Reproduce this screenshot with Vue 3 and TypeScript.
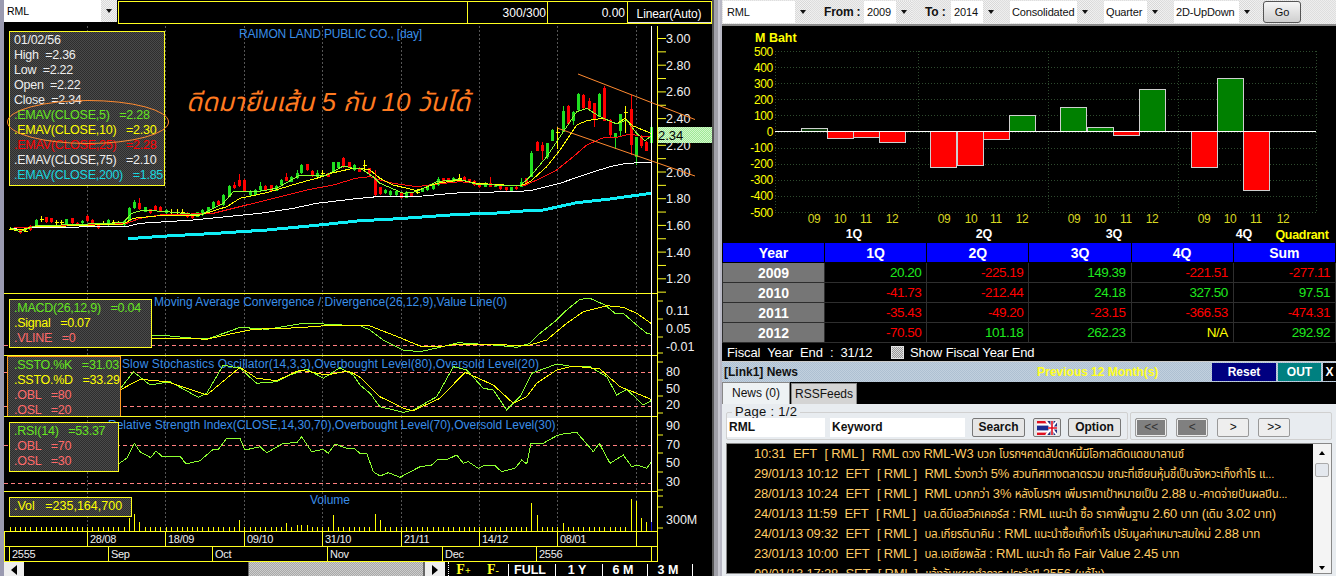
<script setup lang="ts">
type Kind = 'g' | 'r' | 'y'
type Candle = [number, number, number, number, number, Kind]

const raw1: Candle[] = [
  [30,683,687,681,690,'y'],[45,684,690,682,692,'y'],[60,690,698,688,702,'r'],[75,688,695,686,697,'y'],[91,680,690,676,692,'r'],
  [107,660,682,658,684,'g'],[122,653,663,648,665,'y'],[137,652,666,650,668,'r'],[152,655,667,653,669,'r'],[168,662,672,660,674,'y'],
  [183,662,672,660,674,'y'],[199,658,672,656,674,'g'],[215,655,670,654,672,'r'],[230,668,675,666,677,'r'],[246,662,670,660,672,'g'],
  [262,648,664,645,666,'r'],[277,660,668,658,670,'r'],[293,672,685,670,688,'r'],[309,666,672,664,675,'y'],[325,660,675,658,677,'g'],
  [340,662,672,660,675,'y'],[355,665,672,663,674,'y'],[372,662,675,660,677,'g'],[388,625,662,622,664,'g'],[403,605,625,600,628,'g'],
  [418,610,627,595,630,'r'],[434,622,635,620,637,'g'],[450,628,640,626,642,'r'],[466,618,632,616,634,'r'],[481,620,632,618,634,'r'],
  [497,630,640,628,642,'g'],[513,630,640,626,642,'y'],[530,630,640,628,642,'y'],[546,630,640,628,642,'y'],[560,638,650,636,655,'r'],
  [576,645,655,643,657,'r'],[592,637,650,635,652,'g'],[607,630,645,628,647,'g'],[623,622,636,620,638,'g'],[638,607,625,603,627,'g'],
  [654,603,615,601,617,'r'],[670,585,615,583,617,'g'],[686,558,590,556,592,'g'],[702,555,565,545,567,'r'],[717,540,558,522,560,'r'],
  [733,540,575,538,577,'r'],[749,572,585,570,587,'g'],[765,570,585,568,587,'g'],[780,558,570,545,572,'g'],[796,558,570,556,572,'r'],
  [812,556,572,554,574,'r'],[827,558,572,556,574,'g'],[842,540,555,538,557,'g'],[858,530,542,520,544,'r'],[874,530,545,528,547,'g'],
  [890,520,535,510,537,'g'],[904,495,520,493,522,'g'],[920,493,510,491,512,'r'],[935,512,528,510,530,'r'],[951,518,530,510,532,'g'],
  [967,515,530,510,532,'y'],[983,520,530,518,532,'r'],[999,487,515,485,517,'g'],[1014,487,505,485,507,'g'],[1030,473,502,471,504,'r'],
  [1046,487,502,485,504,'r'],[1062,495,510,493,512,'g'],[1077,503,515,501,517,'r'],
]
const raw2: Candle[] = [
  [13,490,510,480,512,'y'],[28,505,520,503,530,'r'],[44,535,585,510,592,'r'],[60,562,582,560,584,'r'],[76,570,580,568,582,'g'],
  [91,572,585,570,587,'g'],[107,572,585,570,587,'g'],[123,580,593,578,595,'r'],[139,575,593,573,595,'g'],[154,580,587,578,589,'r'],
  [170,572,580,568,582,'y'],[186,565,575,563,577,'g'],[202,560,570,558,572,'g'],[218,555,568,553,570,'g'],[233,538,555,530,557,'g'],
  [249,535,545,533,547,'r'],[265,535,547,533,549,'r'],[280,535,545,530,547,'g'],[296,530,545,523,547,'y'],[311,530,540,528,542,'r'],
  [327,538,548,536,550,'r'],[343,543,555,541,557,'r'],[358,552,562,550,564,'r'],[374,550,560,545,562,'g'],[390,548,560,532,562,'r'],
  [405,555,560,552,562,'g'],[421,558,568,556,570,'r'],[437,562,570,560,572,'r'],[452,562,572,560,574,'g'],[468,560,568,558,570,'r'],
  [484,545,560,535,562,'g'],[499,535,552,533,554,'r'],[514,460,530,452,532,'g'],[530,425,452,422,454,'r'],[546,435,452,425,480,'r'],
  [562,430,470,428,478,'g'],[577,390,422,388,424,'g'],[592,390,440,380,447,'y'],[608,332,395,318,397,'g'],[624,318,372,316,376,'r'],
  [640,335,362,333,375,'g'],[655,282,330,278,332,'g'],[670,285,325,283,327,'r'],[686,303,328,295,330,'r'],[702,310,360,308,380,'r'],
  [718,283,350,278,352,'g'],[733,265,362,258,364,'r'],[749,360,405,358,415,'r'],[765,400,415,398,448,'g'],[781,343,392,341,410,'g'],
  [796,330,395,318,400,'y'],[812,327,436,285,465,'r'],[827,412,472,410,495,'g'],[843,408,437,406,445,'r'],[858,425,452,423,454,'r'],
  [873,380,430,375,432,'g'],
]
const candles = [...raw1, ...raw2.map((c): Candle => [c[0] + 1080, c[1], c[2], c[3], c[4], c[5]])].map(c => ({
  x: Math.round(c[0] / 3),
  top: c[1] / 3,
  h: (c[2] - c[1]) / 3,
  y1: c[3] / 3,
  y2: c[4] / 3,
  color: c[5] === 'g' ? '#20e020' : c[5] === 'r' ? '#ff0000' : '#ffff00',
  kind: c[5],
}))

// helper: two lists of points in 3× crops; returns page coordinates
function pts(a: number[], b: number[], oy = 0): string {
  const out: string[] = []
  for (let i = 0; i < a.length; i += 2) out.push(`${(a[i] / 3).toFixed(1)},${(a[i + 1] / 3 + oy).toFixed(1)}`)
  for (let i = 0; i < b.length; i += 2) out.push(`${(b[i] / 3 + 360).toFixed(1)},${(b[i + 1] / 3 + oy).toFixed(1)}`)
  return out.join(' ')
}

const emaCyan = pts([385,716,500,708,650,700,800,690,950,676,1080,662],[100,657,200,650,300,643,400,640,500,632,550,630,650,608,750,597,873,580])
const emaWhite = pts([30,685,100,682,380,680,420,670,580,660,700,648,780,640,880,625,950,610,1060,597],[50,590,190,588,300,578,450,575,510,572,600,550,680,522,750,500,800,490,873,487])
const emaRed = pts([30,685,100,680,380,670,420,655,480,645,640,640,700,625,800,600,920,570,1000,555,1060,537],[0,533,30,530,60,540,100,550,170,560,230,552,300,545,400,555,490,558,530,540,590,510,640,470,680,435,730,413,770,412,810,402,840,408,873,410])
const emaYellow = pts([30,685,60,690,100,680,200,678,370,672,400,655,500,645,600,645,680,620,720,595,800,578,900,548,950,535,1000,518,1060,505],[0,505,30,510,60,535,100,555,170,572,230,550,300,540,350,550,480,558,510,545,560,500,600,450,650,375,680,362,730,355,770,372,795,355,820,378,873,400])
const emaGreen = pts([30,683,60,695,105,678,370,668,395,640,430,630,500,635,600,645,670,610,700,575,770,575,830,565,900,525,980,525,1030,498,1060,505],[0,505,40,530,60,550,130,580,170,575,230,545,300,538,350,553,480,558,510,530,560,470,600,410,650,335,680,325,720,350,770,372,800,360,830,400,855,422,873,408])

const macdG = pts([455,137,500,137,560,143,620,147,680,127,720,112,800,118,910,100,1000,103,1060,108],[0,107,30,120,70,150,130,180,180,185,240,172,295,158,400,165,470,172,510,160,540,130,590,90,620,60,660,28,690,25,735,45,765,70,790,70,830,105,860,130,873,133],290)
const macdY = pts([455,145,560,145,620,148,700,130,760,118,900,113,1000,105,1060,105],[0,105,30,108,100,135,180,168,240,170,290,163,400,163,500,168,560,150,620,100,670,65,740,47,790,52,830,70,873,100],290)
const stoG = pts([360,298,400,245,450,285,510,275,595,322,620,310,670,225,720,235,770,280,830,275,870,255,920,237,970,265,1020,233,1060,255],[0,285,30,310,60,350,130,367,160,360,230,320,280,230,320,240,370,295,400,300,440,360,480,320,515,250,590,222,640,230,690,230,740,260,770,315,800,298,850,345,873,332],290)
const stoY = pts([360,300,420,268,500,275,620,315,720,232,770,265,830,272,900,240,980,255,1040,243,1060,250],[0,262,60,320,130,355,160,362,240,325,315,247,400,285,460,340,500,320,530,280,590,240,640,228,720,237,780,290,830,310,873,328],290)
const rsiG = pts([358,520,380,505,403,460,420,485,452,503,468,483,485,498,540,498,558,522,600,512,640,478,655,478,680,445,720,445,735,480,780,470,800,488,850,460,890,458,905,440,935,485,970,478,985,490,1005,462,1040,475,1062,475],[0,490,20,490,40,545,60,558,85,548,120,562,180,530,215,525,235,507,265,507,290,495,310,520,325,515,355,535,375,525,405,527,425,545,465,535,485,510,500,522,513,460,550,460,590,437,610,432,650,427,700,485,718,460,750,520,790,495,815,530,830,525,860,535,873,517],290)

const priceLabels = ['3.00','2.80','2.60','2.40','2.20','2.00','1.80','1.60','1.40','1.20']
const priceTicks = Array.from({ length: 20 }, (_, i) => 38.5 + i * 13.35)
const dateGrid = [87.5, 165.5, 244.5, 322.5, 401.5, 479.5, 557.5, 636.5]

const bigVol: Record<number, number> = { 129: 13, 134: 17, 139: 9, 239: 11, 297: 6, 302: 6, 307: 6, 333: 16, 287: 8, 374: 17, 380: 11, 531: 28, 537: 16, 562: 8, 631: 32, 637: 30, 641: 13, 646: 9, 649: 10 }
const volBars = candles.map(c => {
  let h = 4
  for (const k of Object.keys(bigVol)) {
    if (Math.abs(Number(k) - c.x) <= 2) h = bigVol[Number(k)]
  }
  return { x: c.x, h }
})

const legendMain = [
  ['01/02/56', 'c-white'], ['High  =2.36', 'c-white'], ['Low  =2.22', 'c-white'], ['Open  =2.22', 'c-white'], ['Close  =2.34', 'c-white'],
  ['.EMAV(CLOSE,5)   =2.28', 'c-green'], ['.EMAV(CLOSE,10)   =2.30', 'c-yellow'], ['.EMAV(CLOSE,25)   =2.28', 'c-red'],
  ['.EMAV(CLOSE,75)   =2.10', 'c-white'], ['.EMAV(CLOSE,200)   =1.85', 'c-cyan'],
]
const legendMacd = [['.MACD(26,12,9)   =0.04', 'c-green'], ['.Signal   =0.07', 'c-yellow'], ['.VLINE   =0', 'c-pink']]
const legendSto = [['.SSTO.%K   =31.03', 'c-green'], ['.SSTO.%D   =33.29', 'c-yellow'], ['.OBL   =80', 'c-pink'], ['.OSL   =20', 'c-pink']]
const legendRsi = [['.RSI(14)   =53.37', 'c-green'], ['.OBL   =70', 'c-pink'], ['.OSL   =30', 'c-pink']]
const legendVol = '.Vol   =235,164,700'

const dates = ['', '28/08', '18/09', '09/10', '31/10', '21/11', '14/12', '08/01', '']
const months = ['', '2555', 'Sep', 'Oct', 'Nov', 'Dec', '2556', '']

const zoomBtns = ['FULL', '1 Y', '6 M', '3 M']

const barYLabels = [500, 400, 300, 200, 100, 0, -100, -200, -300, -400, -500]
const zero = 131.5
const barScale = 0.161
const barGroups = [
  [[801, 20.2, 'l'], [827, -41.73, 'd'], [853, -35.43, 'd'], [879, -70.5, 'd']],
  [[930, -225.19, 'd'], [957, -212.44, 'd'], [983, -49.2, 'd'], [1009, 101.18, 'u']],
  [[1060, 149.39, 'u'], [1087, 24.18, 'u'], [1113, -23.15, 'd'], [1139, 262.23, 'u']],
  [[1191, -221.51, 'd'], [1217, 327.5, 'u'], [1243, -366.53, 'd']],
] as [number, number, string][][]
const bars = barGroups.flat().map(([x, v, k]) => ({
  x,
  y: v >= 0 ? zero - v * barScale : zero,
  h: Math.abs(v) * barScale,
  fill: k === 'l' ? '#0a3a0a' : k === 'u' ? '#008000' : '#ff0000',
}))
const barXLabels = [814, 840, 866, 892, 944, 971, 996, 1022, 1074, 1100, 1126, 1152, 1204, 1230, 1256, 1283]
const barXText = ['09', '10', '11', '12']

const table = [
  ['2009', '20.20', '-225.19', '149.39', '-221.51', '-277.11'],
  ['2010', '-41.73', '-212.44', '24.18', '327.50', '97.51'],
  ['2011', '-35.43', '-49.20', '-23.15', '-366.53', '-474.31'],
  ['2012', '-70.50', '101.18', '262.23', 'N/A', '292.92'],
]
function cellClass(v: string): string {
  if (v === 'N/A') return 'c-yellow'
  return v.startsWith('-') ? 'c-red' : 'c-lime'
}

const news = [
  ['10:31', 'EFT', 'RML ดวง RML-W3 บวก โบรกฯคาดสัปดาห์นี้มีโอกาสติดแดชบาลานซ์'],
  ['29/01/13 10:12', 'EFT', 'RML ร่วงกว่า 5% สวนทิศทางตลาดรวม ขณะที่เซียนหุ้นชี้เป็นจังหวะเก็งกำไร แ...'],
  ['28/01/13 10:24', 'EFT', 'RML บวกกว่า 3% หลังโบรกฯ เพิ่มราคาเป้าหมายเป็น 2.88 บ.-คาดจ่ายปันผลปีน...'],
  ['24/01/13 11:59', 'EFT', 'บล.ดีบีเอสวิคเคอร์ส : RML แนะนำ ซื้อ ราคาพื้นฐาน 2.60 บาท (เดิม 3.02 บาท)'],
  ['24/01/13 09:32', 'EFT', 'บล.เกียรตินาคิน : RML แนะนำซื้อเก็งกำไร ปรับมูลค่าเหมาะสมใหม่ 2.88 บาท'],
  ['23/01/13 10:00', 'EFT', 'บล.เอเซียพลัส : RML แนะนำ ถือ Fair Value 2.45 บาท'],
  ['09/01/13 17:28', 'SET', 'แจ้งวันหยุดทำการ ประจำปี 2556 (แก้ไข)'],
]
// Thai runs are drawn smaller than the Latin text around them, as in the reference
function runs(text: string): { t: string; th: boolean }[] {
  return text
    .split(/([\u0E00-\u0E7F.]*[\u0E00-\u0E7F][\u0E00-\u0E7F.]*)/)
    .filter(s => s.length > 0)
    .map(s => ({ t: s, th: /[\u0E00-\u0E7F]/.test(s) }))
}
</script>

<template>
  <div class="app">
    <section class="left">
      <div class="topbar">
        <div class="symbol"><span>RML</span><i class="arrow-btn dark"></i></div>
        <div class="topcells">
          <div class="tc tc-a"></div>
          <div class="tc tc-b">300/300</div>
          <div class="tc tc-c">0.00</div>
          <div class="tc tc-d"><span>Linear(Auto)</span></div>
        </div>
      </div>

      <div class="panel p-main">
        <svg class="plot" viewBox="4 24 708 269" width="708" height="269">
          <defs>
            <pattern id="gdither" width="2" height="2" patternUnits="userSpaceOnUse">
              <rect width="2" height="2" fill="#9fe896" />
              <rect width="1" height="1" fill="#d4f8cc" />
              <rect x="1" y="1" width="1" height="1" fill="#d4f8cc" />
            </pattern>
          </defs>
          <line v-for="x in dateGrid" :key="x" :x1="x" y1="26" :x2="x" y2="293" class="vgrid" />
          <text x="239" y="38" class="title main-title">RAIMON LAND PUBLIC CO., [day]</text>
          <polyline :points="emaCyan" fill="none" stroke="#10eef6" stroke-width="3" shape-rendering="crispEdges" />
          <g shape-rendering="crispEdges">
            <g v-for="c in candles" :key="c.x">
              <line :x1="c.x + 0.5" :y1="c.y1" :x2="c.x + 0.5" :y2="c.y2" :stroke="c.color" />
              <rect v-if="c.kind !== 'y'" :x="c.x - 1" :y="c.top" width="3.4" :height="c.h" :fill="c.color" />
              <line v-else :x1="c.x - 1.5" :y1="c.top + 2" :x2="c.x + 2.5" :y2="c.top + 2" :stroke="c.color" />
            </g>
          </g>
          <polyline :points="emaWhite" class="ln" stroke="#ffffff" />
          <polyline :points="emaRed" class="ln" stroke="#ff1010" />
          <polyline :points="emaYellow" class="ln" stroke="#ffff00" />
          <polyline :points="emaGreen" class="ln" stroke="#8cff30" />
          <line x1="651.5" y1="26" x2="651.5" y2="293" stroke="#fff" />
          <line x1="657.5" y1="26" x2="657.5" y2="293" class="axis" />
          <line v-for="t in priceTicks" :key="t" x1="658" :y1="t" x2="666" :y2="t" class="axis" />
          <text v-for="(l, i) in priceLabels" :key="l" x="666" :y="43 + i * 26.7" class="ax-lab">{{ l }}</text>
          <rect x="658" y="127" width="54" height="16" fill="url(#gdither)" />
          <text x="658" y="140" class="last-lab">2.34</text>
        </svg>
        <div class="legend lg-main">
          <div v-for="l in legendMain" :key="l[0]" :class="l[1]">{{ l[0] }}</div>
        </div>
        <svg class="annot" viewBox="4 24 708 269" width="708" height="269">
          <ellipse cx="88" cy="122" rx="80.5" ry="21.5" fill="none" stroke="#ff8a30" />
          <line x1="578" y1="74" x2="695" y2="119.5" stroke="#ff8a30" />
          <line x1="557" y1="128" x2="695" y2="176" stroke="#ff8a30" />
          <text x="186" y="111" class="thai-note">ดีดมายืนเส้น 5 กับ 10 วันได้</text>
        </svg>
      </div>

      <div class="panel p-macd">
        <svg class="plot" viewBox="4 293 708 62" width="708" height="62">
          <line v-for="x in dateGrid" :key="x" :x1="x" y1="293" :x2="x" y2="355" class="vgrid" />
          <line x1="4" y1="293.5" x2="657" y2="293.5" class="axis" />
          <line x1="4" y1="345.5" x2="651" y2="345.5" class="dash" />
          <text x="154" y="306" class="title">Moving Average Convergence / Divergence(26,12,9),Value Line(0)</text>
          <polyline :points="macdG" class="ln" stroke="#8cff30" />
          <polyline :points="macdY" class="ln" stroke="#ffff00" />
          <line x1="651.5" y1="293" x2="651.5" y2="355" stroke="#fff" />
          <line x1="657.5" y1="293" x2="657.5" y2="355" class="axis" />
          <line v-for="t in [301, 319, 337, 353]" :key="t" x1="658" :y1="t" x2="663" :y2="t" class="axis" />
          <text x="666" y="315" class="ax-lab">0.11</text>
          <text x="666" y="333" class="ax-lab">0.05</text>
          <text x="666" y="351" class="ax-lab neg">-0.01</text>
        </svg>
        <div class="legend lg-macd"><div v-for="l in legendMacd" :key="l[0]" :class="l[1]">{{ l[0] }}</div></div>
      </div>

      <div class="panel p-sto">
        <svg class="plot" viewBox="4 355 708 61" width="708" height="61">
          <line v-for="x in dateGrid" :key="x" :x1="x" y1="355" :x2="x" y2="416" class="vgrid" />
          <line x1="4" y1="355" x2="657" y2="355" class="axis thick" />
          <line x1="4" y1="372.5" x2="651" y2="372.5" class="dash" />
          <line x1="4" y1="406.5" x2="651" y2="406.5" class="dash" />
          <text x="122" y="368" class="title wide">Slow Stochastics Oscillator(14,3,3),Overbought Level(80),Oversold Level(20)</text>
          <polyline :points="stoG" class="ln" stroke="#8cff30" />
          <polyline :points="stoY" class="ln" stroke="#ffff00" />
          <line x1="651.5" y1="355" x2="651.5" y2="416" stroke="#fff" />
          <line x1="657.5" y1="355" x2="657.5" y2="416" class="axis" />
          <line v-for="t in [362, 380, 396, 413]" :key="t" x1="658" :y1="t" x2="663" :y2="t" class="axis" />
          <text x="666" y="376" class="ax-lab">80</text>
          <text x="666" y="393" class="ax-lab">50</text>
          <text x="666" y="409" class="ax-lab">20</text>
        </svg>
        <div class="legend lg-sto"><div v-for="l in legendSto" :key="l[0]" :class="l[1]">{{ l[0] }}</div></div>
      </div>

      <div class="panel p-rsi">
        <svg class="plot" viewBox="4 416 708 75" width="708" height="75">
          <line v-for="x in dateGrid" :key="x" :x1="x" y1="416" :x2="x" y2="491" class="vgrid" />
          <line x1="4" y1="416" x2="657" y2="416" class="axis thick" />
          <line x1="4" y1="445.5" x2="651" y2="445.5" class="dash" />
          <line x1="4" y1="483.5" x2="651" y2="483.5" class="dash" />
          <text x="108" y="429" class="title">Relative Strength Index(CLOSE,14,30,70),Overbought Level(70),Oversold Level(30)</text>
          <polyline :points="rsiG" class="ln" stroke="#8cff30" />
          <line x1="651.5" y1="416" x2="651.5" y2="491" stroke="#fff" />
          <line x1="657.5" y1="416" x2="657.5" y2="491" class="axis" />
          <line v-for="t in [435, 453, 472, 490]" :key="t" x1="658" :y1="t" x2="663" :y2="t" class="axis" />
          <text x="666" y="430" class="ax-lab">90</text>
          <text x="666" y="449" class="ax-lab">70</text>
          <text x="666" y="467" class="ax-lab">50</text>
          <text x="666" y="486" class="ax-lab">30</text>
        </svg>
        <div class="legend lg-rsi"><div v-for="l in legendRsi" :key="l[0]" :class="l[1]">{{ l[0] }}</div></div>
      </div>

      <div class="panel p-vol">
        <svg class="plot" viewBox="4 491 708 40" width="708" height="40">
          <line x1="4" y1="491.5" x2="657" y2="491.5" class="axis" />
          <line v-for="x in dateGrid" :key="x" :x1="x" y1="492" :x2="x" y2="531" class="vgrid" />
          <text x="310" y="504" class="title">Volume</text>
          <g shape-rendering="crispEdges">
            <line v-for="b in volBars" :key="b.x" :x1="b.x + 0.5" :y1="531 - b.h" :x2="b.x + 0.5" y2="531" stroke="#ffff00" />
          </g>
          <line x1="651.5" y1="491" x2="651.5" y2="522" stroke="#fff" />
          <line x1="651.5" y1="522" x2="651.5" y2="531" stroke="#2020e0" />
          <line x1="657.5" y1="491" x2="657.5" y2="531" class="axis" />
          <line v-for="t in [496, 507, 528]" :key="t" x1="658" :y1="t" x2="663" :y2="t" class="axis" />
          <text x="666" y="524" class="ax-lab">300M</text>
        </svg>
        <div class="legend lg-vol c-yellow">{{ legendVol }}</div>
      </div>

      <div class="datebar">
        <div class="daterow">
          <div v-for="(d, i) in dates" :key="i" class="dcell">{{ d }}</div>
        </div>
        <div class="monthrow">
          <div v-for="(m, i) in months" :key="i" class="mcell">{{ m }}</div>
        </div>
      </div>

      <div class="bottombar">
        <div class="sb-btn"><svg width="6" height="10" viewBox="0 0 6 10"><path d="M6 0v10L0 5z" fill="#000"/></svg></div>
        <div class="sb-track"></div>
        <div class="sb-thumb"></div>
        <div class="sb-btn"><svg width="6" height="10" viewBox="0 0 6 10"><path d="M0 0v10l6-5z" fill="#000"/></svg></div>
        <div class="ztool">
          <span class="zf">F<small>+</small></span>
          <span class="zf">F<small>-</small></span>
          <span v-for="z in zoomBtns" :key="z" class="zb">{{ z }}</span>
        </div>
      </div>
    </section>

    <div class="splitter"></div>

    <section class="right">
      <div class="toolbar">
        <div class="combo w-rml"><span>RML</span></div><i class="arrow-btn"></i>
        <b class="lab ml-from">From :</b>
        <div class="combo w-yr"><span>2009</span></div><i class="arrow-btn"></i>
        <b class="lab ml-to">To :</b>
        <div class="combo w-yr"><span>2014</span></div><i class="arrow-btn"></i>
        <div class="combo w-con ml-s"><span>Consolidated</span></div><i class="arrow-btn"></i>
        <div class="combo w-qua ml-s"><span>Quarter</span></div><i class="arrow-btn"></i>
        <div class="combo w-2d ml-s"><span>2D-UpDown</span></div><i class="arrow-btn"></i>
        <button class="go">Go</button>
      </div>

      <div class="barchart">
        <svg viewBox="722 26 614 217" width="614" height="217">
          <g shape-rendering="crispEdges">
            <line v-for="(l, i) in barYLabels" :key="l" x1="775" :y1="51.5 + i * 16.1" x2="1316" :y2="51.5 + i * 16.1" class="bgrid" />
            <line v-for="x in [775.5, 918.5, 1048.5, 1178.5, 1316.5]" :key="x" :x1="x" y1="51" :x2="x" y2="212" class="bgrid" />
            <rect v-for="b in bars" :key="b.x" :x="b.x + 0.5" :y="b.y" width="26" :height="b.h" :fill="b.fill" stroke="#cfcfcf" />
            <line x1="775" y1="131.5" x2="1316" y2="131.5" stroke="#ffffff" />
          </g>
          <text x="755" y="42" class="mbaht">M Baht</text>
          <text v-for="(l, i) in barYLabels" :key="l" x="773" :y="55.5 + i * 16.1" class="by-lab">{{ l }}</text>
          <text v-for="(x, i) in barXLabels" :key="x" :x="x" y="223" class="bx-lab">{{ barXText[i % 4] }}</text>
          <text x="854" y="238" class="q-lab">1Q</text>
          <text x="984" y="238" class="q-lab">2Q</text>
          <text x="1114" y="238" class="q-lab">3Q</text>
          <text x="1244" y="238" class="q-lab">4Q</text>
          <text x="1302" y="239" class="quad">Quadrant</text>
        </svg>
      </div>

      <table class="fin">
        <thead>
          <tr><th v-for="h in ['Year', '1Q', '2Q', '3Q', '4Q', 'Sum']" :key="h">{{ h }}</th></tr>
        </thead>
        <tbody>
          <tr v-for="r in table" :key="r[0]">
            <td class="yr">{{ r[0] }}</td>
            <td v-for="(v, i) in r.slice(1)" :key="i" :class="cellClass(v)">{{ v }}</td>
          </tr>
        </tbody>
      </table>

      <div class="fiscal">
        <span class="fy">Fiscal&nbsp; Year&nbsp; End&nbsp; :&nbsp; 31/12</span>
        <i class="chk"></i>
        <span>Show Fiscal Year End</span>
      </div>

      <div class="newshead">
        <b class="nh-title">[Link1] News</b>
        <b class="nh-prev">Previous 12 Month(s)</b>
        <b class="nh-btn reset">Reset</b>
        <b class="nh-btn out">OUT</b>
        <b class="nh-btn x">X</b>
      </div>

      <div class="tabs">
        <div class="tab active">News (0)</div>
        <div class="tab">RSSFeeds</div>
      </div>

      <div class="newsbody">
        <div class="controls">
          <fieldset class="fs fs-a">
            <legend>Page : 1/2</legend>
            <div class="ctlrow">
              <div class="inp i-a">RML</div>
              <div class="inp i-b">Keyword</div>
              <div class="btn b-search">Search</div>
              <div class="btn b-flag">
                <svg width="20" height="14" viewBox="0 0 20 14">
                  <rect width="20" height="14" fill="#fff"/>
                  <rect y="0" width="20" height="2.4" fill="#e01020"/>
                  <rect y="4.6" width="20" height="4.8" fill="#1a2a90"/>
                  <rect y="11.6" width="20" height="2.4" fill="#e01020"/>
                  <path d="M20 0H9L20 9z" fill="#24307f"/>
                  <path d="M20 5L9 14h11z" fill="#24307f"/>
                  <path d="M9 0l11 14M20 0L9 14" stroke="#fff" stroke-width="2"/>
                  <path d="M15 0v14M11 7h9" stroke="#fff" stroke-width="3"/>
                  <path d="M15 0v14M11 7h9" stroke="#e01020" stroke-width="1.6"/>
                </svg>
              </div>
              <div class="btn b-opt">Option</div>
            </div>
          </fieldset>
          <fieldset class="fs fs-b">
            <div class="ctlrow pager">
              <div class="pg off">&lt;&lt;</div>
              <div class="pg off p1">&lt;</div>
              <div class="pg">&gt;</div>
              <div class="pg">&gt;&gt;</div>
            </div>
          </fieldset>
        </div>

        <div class="listbox">
          <div class="list">
            <div v-for="(n, i) in news" :key="i" class="row">
              <span>{{ n[0] }}</span><span class="m">{{ n[1] }}</span><span class="m">[ RML ]</span><span class="m"><span v-for="(r, j) in runs(n[2])" :key="j" :class="{ th: r.th }">{{ r.t }}</span></span>
            </div>
          </div>
          <div class="vscroll">
            <svg width="10" height="6" viewBox="0 0 10 6"><path d="M5 1l3 4H2z" fill="#000"/></svg>
            <div class="vthumb"></div>
            <div class="vspace"></div>
            <svg width="10" height="6" viewBox="0 0 10 6"><path d="M5 5l3-4H2z" fill="#000"/></svg>
          </div>
        </div>
      </div>
    </section>
  </div>
</template>

<style>
html, body { margin: 0; padding: 0; background: #b0b0bc; }
</style>

<style scoped>
.app {
  display: flex;
  width: 1336px;
  height: 576px;
  overflow: hidden;
  font-family: "Liberation Sans", Arial, "Noto Sans Thai", "Noto Sans", sans-serif;
  background: #b8b8c4;
}
.left {
  width: 712px;
  flex: none;
  box-sizing: border-box;
  border-left: 4px solid #9a9ab0;
  background: #000;
  display: flex;
  flex-direction: column;
  color: #fff;
}
.splitter {
  width: 8px;
  flex: none;
  background: linear-gradient(90deg, #555 0 2px, #a0a0a8 2px 6px, #c8c8d0 6px);
}
.topbar { display: flex; height: 24px; flex: none; }
.symbol {
  width: 113px;
  height: 22px;
  background: #fff;
  color: #000;
  font-size: 10.5px;
  display: flex;
  align-items: center;
  justify-content: space-between;
  padding-left: 3px;
  box-sizing: border-box;
}
.topcells {
  margin-left: 1px;
  flex: 1;
  display: flex;
  height: 23px;
  margin-top: 1px;
  box-sizing: border-box;
  border: 1px solid #ffff20;
  font-size: 12px;
}
.tc { border-right: 1px solid #ffff20; display: flex; align-items: center; justify-content: flex-end; padding-right: 1px; box-sizing: border-box; }
.tc-a { width: 349px; }
.tc-b { width: 80px; }
.tc-c { width: 80px; padding-right: 2px; }
.tc-d { flex: 1; border-right: 0; justify-content: center; border-bottom: 1px solid #ddd; padding-top: 3px; }
.tc-d span { letter-spacing: -0.1px; }

.arrow-btn {
  flex: none;
  display: block;
  position: relative;
  width: 16px;
  height: 22px;
  background-color: #e4e4e4;
  background-image: repeating-conic-gradient(#f2f2f2 0 25%, #d8d8d8 0 50%);
  background-size: 2px 2px;
}
.arrow-btn::after {
  content: "";
  position: absolute;
  left: 5px;
  top: 9px;
  border: 3px solid transparent;
  border-top: 4px solid #111;
  border-bottom: 0;
}

.panel { position: relative; flex: none; }
.plot, .annot { display: block; }
.annot { position: absolute; left: 0; top: 0; pointer-events: none; }
.vgrid { stroke: #555; stroke-width: 1; stroke-dasharray: 2 2; }
.ln { fill: none; stroke-width: 1; shape-rendering: crispEdges; }
.axis { stroke: #ffff20; stroke-width: 1; }
.axis.thick { stroke-width: 2; }
.dash { stroke: #ff7f7f; stroke-dasharray: 4 3; }
.title { fill: #3a8ee8; font-size: 12px; }
.title.main-title { letter-spacing: -0.15px; }
.title.wide { letter-spacing: 0.1px; }
.ax-lab { fill: #f0f0f0; font-size: 12.5px; }
.last-lab { fill: #000; font-size: 13px; }
.thai-note { fill: #ff7a20; font-size: 26px; font-style: italic; }

.legend {
  position: absolute;
  box-sizing: border-box;
  border: 1px solid #ffff20;
  background-color: #3a3a3a;
  background-image: repeating-conic-gradient(#4a4a4a 0 25%, #2e2e2e 0 50%);
  background-size: 2px 2px;
  font-size: 12.5px;
  line-height: 15px;
  white-space: pre;
  padding: 1px 0 0 4px;
  letter-spacing: -0.25px;
}
.lg-main { left: 5px; top: 7px; width: 156px; height: 155px; }
.lg-macd { left: 5px; top: 6px; width: 143px; height: 49px; }
.lg-sto { left: 3px; top: 1px; width: 114px; height: 60px; border-color: #ff9a20; border-bottom: 0; padding-left: 6px; }
.lg-rsi { left: 5px; top: 6px; width: 110px; height: 50px; }
.lg-vol { left: 5px; top: 6px; width: 123px; height: 20px; letter-spacing: 0; }
.c-white { color: #eee; }
.c-green { color: #66e620; }
.c-yellow { color: #ffff00; }
.c-red { color: #ff0000; }
.c-cyan { color: #18d8e0; }
.c-pink { color: #ff6a6a; }
.c-lime { color: #1ee81e; }

.datebar { flex: none; width: 654px; font-size: 11px; letter-spacing: -0.3px; color: #eee; }
.daterow {
  display: grid;
  grid-template-columns: 84px 78px 79px 78px 79px 78px 78px 79px 21px;
  height: 15px;
  border-top: 1px solid #ffff20;
  box-sizing: border-box;
}
.monthrow {
  display: grid;
  grid-template-columns: 6px 99px 104px 115px 115px 94px 115px 6px;
  height: 16px;
  border-top: 1px solid #ffff20;
  border-bottom: 1px solid #ffff20;
  box-sizing: border-box;
}
.dcell, .mcell {
  border-right: 1px solid #ffff20;
  padding-left: 2px;
  line-height: 14px;
  box-sizing: border-box;
  overflow: hidden;
}
.dcell:first-child, .mcell:first-child { border-left: 1px solid #ffff20; }

.bottombar { flex: 1; display: flex; background: #000; align-items: stretch; }
.sb-btn {
  width: 20px;
  background: #eee;
  display: flex;
  align-items: center;
  justify-content: center;
  flex: none;
}
.sb-track { width: 224px; flex: none; }
.sb-thumb {
  width: 177px;
  flex: none;
  border-left: 1px solid #666;
  border-right: 2px solid #666;
  box-sizing: border-box;
  background-color: #bbb;
  background-image: repeating-conic-gradient(#ccc 0 25%, #a8a8a8 0 50%);
  background-size: 2px 2px;
}
.ztool { flex: 1; display: flex; align-items: center; font-weight: 700; color: #fff; font-size: 12.5px; padding-left: 3px; }
.zf { color: #ffff20; width: 30px; text-align: center; font-family: "Liberation Serif", serif; font-size: 14px; border-left: 1px dotted #fff; box-sizing: border-box; }
.zf small { font-size: 10px; }
.zf + .zf { border-left: 0; }
.zb { border-left: 1px solid #fff; text-align: center; line-height: 12px; flex: none; width: 47px; padding-right: 4px; box-sizing: border-box; }
.zb:first-of-type { width: 56px; }
.zb:nth-last-child(2) { width: 45px; }
.zb:last-child { width: 46px; border-right: 1px solid #fff; }

.right {
  flex: 1;
  display: flex;
  flex-direction: column;
  box-sizing: border-box;
  border-left: 2px solid #b8b8c4;
  background: #000;
  font-size: 14px;
  color: #fff;
  min-width: 0;
}
.toolbar {
  flex: none;
  height: 26px;
  box-sizing: border-box;
  padding: 2px 0 2px 1px;
  display: flex;
  align-items: center;
  font-size: 11px;
  letter-spacing: -0.15px;
  color: #111;
  background-color: #e8e8e8;
  background-image: repeating-conic-gradient(#eee 0 25%, #dedede 0 50%);
  background-size: 2px 2px;
  border-bottom: 2px solid #8a8a8a;
}
.combo { height: 22px; background: #fff; display: flex; align-items: center; padding-left: 2px; box-sizing: border-box; flex: none; }
.w-rml { width: 72px; padding-left: 4px; }
.w-yr { width: 32px; padding-left: 3px; }
.w-con { width: 67px; }
.w-qua { width: 43px; }
.w-2d { width: 65px; }
.ml-s { margin-left: 11px; }
.lab { font-size: 12px; flex: none; }
.ml-from { margin-left: 13px; width: 40px; }
.ml-to { margin-left: 13px; width: 26px; }
.go {
  margin-left: 8px;
  width: 38px;
  height: 22px;
  padding: 0;
  font: 11px "Liberation Sans", sans-serif;
  color: #111;
  background: linear-gradient(#f6f6f6, #cfcfcf);
  border: 1px solid #555;
  border-radius: 3px;
  flex: none;
}
.barchart { flex: none; height: 216px; overflow: hidden; }
.barchart svg { display: block; }
.bgrid { stroke: #2e4a2e; stroke-dasharray: 1 2; }
.mbaht { fill: #ffff00; font-size: 12.5px; font-weight: 700; }
.by-lab { fill: #ffff00; font-size: 12px; text-anchor: end; letter-spacing: -0.3px; }
.bx-lab { fill: #d8d820; font-size: 12px; text-anchor: middle; letter-spacing: -0.3px; }
.q-lab { fill: #fff; font-size: 12.5px; font-weight: 700; text-anchor: middle; }
.quad { fill: #ffff00; font-size: 12.5px; font-weight: 700; text-anchor: middle; letter-spacing: -0.3px; }

.fin {
  flex: none;
  width: 614px;
  table-layout: fixed;
  border-collapse: collapse;
  font-size: 13.5px;
  letter-spacing: -0.5px;
}
.fin th {
  height: 20px;
  padding: 0;
  background: #0000ff;
  color: #fff;
  font-size: 14px;
  font-weight: 700;
  border: 1px solid #000;
  letter-spacing: 0;
  box-sizing: border-box;
}
.fin td {
  height: 20px;
  padding: 0 5px 0 0;
  text-align: right;
  border: 1px solid #2e2e2e;
  box-sizing: border-box;
}
.fin td.yr {
  text-align: center;
  padding: 0;
  color: #fff;
  font-weight: 700;
  font-size: 14px;
  letter-spacing: 0;
  background-color: #777;
  background-image: repeating-conic-gradient(#848484 0 25%, #686868 0 50%);
  background-size: 2px 2px;
}
.fin th:first-child, .fin td:first-child { width: 102px; }

.fiscal {
  flex: none;
  height: 18px;
  display: flex;
  align-items: center;
  font-size: 13px;
  padding-left: 5px;
  letter-spacing: -0.1px;
}
.fy { width: 164px; flex: none; }
.chk {
  display: block;
  width: 13px;
  height: 13px;
  margin-right: 6px;
  background-color: #bbb;
  background-image: repeating-conic-gradient(#ddd 0 25%, #999 0 50%);
  background-size: 2px 2px;
  border: 1px solid #e4e4e4;
  box-sizing: border-box;
}
.newshead {
  flex: none;
  height: 21px;
  display: flex;
  align-items: center;
  font-size: 12px;
  color: #111;
  border-top: 1px solid #ccc;
  box-sizing: border-box;
  background-color: #b8c8d8;
  background-image: repeating-conic-gradient(#c2d0de 0 25%, #aec0d2 0 50%);
  background-size: 2px 2px;
  padding-left: 2px;
}
.nh-title { width: 313px; flex: none; }
.nh-prev { width: 175px; flex: none; color: #ffff20; }
.nh-btn { height: 18px; line-height: 18px; text-align: center; color: #fff; flex: none; }
.reset { width: 64px; background: #000080; }
.out { width: 43px; margin-left: 2px; background: #008080; }
.x { width: 13px; margin-left: 2px; background: #000; }
.tabs { flex: none; height: 22px; display: flex; background: #000; align-items: flex-end; font-size: 12px; color: #111; }
.tab {
  height: 21px;
  line-height: 20px;
  box-sizing: border-box;
  width: 66px;
  margin-left: 1px;
  text-align: center;
  background: #d4d4d4;
  border: 1px solid #888;
  border-bottom: 0;
}
.tab.active { width: 68px; height: 22px; background: #eef2f4; margin-left: 0; }
.newsbody {
  flex: 1;
  min-height: 0;
  background: #e8ecf0;
  color: #111;
  padding: 0 4px 2px 4px;
  display: flex;
  flex-direction: column;
}
.controls { flex: none; display: flex; height: 39px; font-size: 12px; }
.fs {
  padding: 0;
  border: 1px solid #d0d0d0;
  border-radius: 2px;
  box-sizing: border-box;
  min-width: 0;
}
.fs legend { padding: 0 3px; margin-left: 5px; font-weight: 400; font-size: 13px; line-height: 12px; letter-spacing: 0.3px; }
.fs-a { width: 403px; margin: 2px 0 0; height: 34px; }
.fs-b { width: 202px; margin: 8px 0 0 2px; height: 28px; }
.ctlrow { display: flex; align-items: center; height: 19px; font-weight: 700; }
.fs-a .ctlrow { margin-top: 0; }
.fs-b .ctlrow { margin-top: 5px; }
.inp { background: #fff; height: 19px; line-height: 19px; padding-left: 2px; box-sizing: border-box; flex: none; }
.i-a { width: 98px; }
.i-b { width: 135px; margin-left: 5px; }
.btn {
  height: 19px;
  line-height: 17px;
  text-align: center;
  box-sizing: border-box;
  border: 1px solid #777;
  border-radius: 2px;
  background: #e6e6e6;
  flex: none;
}
.b-search { width: 53px; margin-left: 7px; }
.b-flag { width: 28px; margin-left: 8px; display: flex; align-items: center; justify-content: center; }
.b-opt { width: 53px; margin-left: 7px; }
.pager { padding-left: 4px; font-weight: 400; }
.pg {
  width: 32px;
  height: 19px;
  line-height: 17px;
  text-align: center;
  box-sizing: border-box;
  border: 1px solid #999;
  border-radius: 2px;
  background: #eee;
  margin-right: 9px;
  flex: none;
}
.pg.off { background: #808080; color: #333; box-shadow: inset 0 0 0 1px #eee; }
.listbox {
  flex: 1;
  min-height: 0;
  display: flex;
  border: 1px solid #888;
  box-sizing: border-box;
  overflow: hidden;
}
.list {
  flex: 1;
  min-width: 0;
  background: #000;
  color: #ffcc66;
  font-size: 13px;
  padding-left: 27px;
  overflow: hidden;
  letter-spacing: -0.2px;
}
.row { height: 20px; line-height: 20px; white-space: nowrap; }
.row .m { margin-left: 7.5px; }
.row .th { font-size: 11.5px; letter-spacing: -0.25px; }
.vscroll {
  width: 18px;
  flex: none;
  background: #f4f4f4;
  display: flex;
  flex-direction: column;
  align-items: center;
  padding-top: 6px;
  padding-bottom: 2px;
  box-sizing: border-box;
}
.vthumb { width: 14px; height: 14px; margin-top: 7px; background: #e4e8ee; border: 1px solid #aaa; border-radius: 2px; box-sizing: border-box; }
.vspace { flex: 1; }
</style>
